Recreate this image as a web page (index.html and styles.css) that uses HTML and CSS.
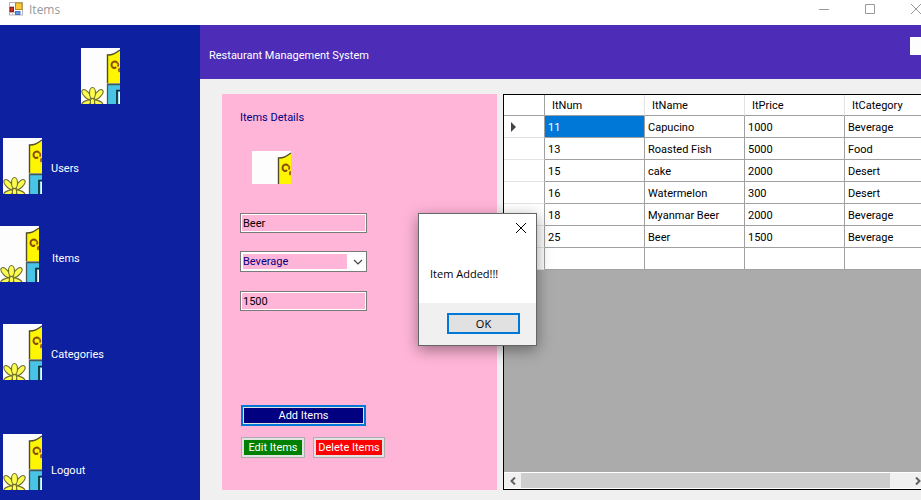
FILE: index.html
```html
<!DOCTYPE html>
<html lang="en">
<head>
<meta charset="utf-8">
<title>Items</title>
<link rel="stylesheet" href="styles.css">
</head>
<body>
<svg class="defs" aria-hidden="true">
  <symbol id="house" viewBox="0 0 39 56" preserveAspectRatio="xMinYMin slice">
    <rect width="39" height="56" fill="#fdfdfd"/>
    <path d="M27 7 C32 7 34 5.500 39 2 V35 H27Z" fill="#fdf600"/>
    <path d="M26.500 35.500 V7 C32 7 34 5.500 39 2" fill="none" stroke="#4f4a28" stroke-width="1.400"/>
    <path d="M36 14.500 C33.500 12.500 30.500 14 30.500 17 C30.500 20 33.500 20.800 35 19" fill="none" stroke="#8a4a0c" stroke-width="2"/>
    <path d="M36 14.500 Q38.500 16.500 36.500 18.500 M39 20.500 Q37 21 38.500 24" fill="none" stroke="#a05a0c" stroke-width="1.800"/>
    <path d="M26 35.500 H39" stroke="#b5b27a" stroke-width="1"/>
    <rect x="27" y="37" width="12" height="19" fill="#48c5e6"/>
    <path d="M26.500 56 V36.500 H39" fill="none" stroke="#44575b" stroke-width="1.300"/>
    <path d="M36 56 V42.500 H39" fill="none" stroke="#15262b" stroke-width="1.700"/>
    <rect x="37.500" y="44" width="2" height="12" fill="#fff"/>
    <g fill="#fbfb50" stroke="#6e6e2c" stroke-width="1.100">
      <ellipse cx="5.500" cy="55" rx="2.300" ry="5" transform="rotate(68 5.500 55)"/>
      <ellipse cx="17" cy="55" rx="2.300" ry="5" transform="rotate(-68 17 55)"/>
      <ellipse cx="5.500" cy="46.500" rx="2.800" ry="6" transform="rotate(-42 5.500 46.500)"/>
      <ellipse cx="17.500" cy="46.500" rx="2.800" ry="6" transform="rotate(42 17.500 46.500)"/>
      <ellipse cx="11.500" cy="45" rx="3" ry="5.500"/>
      <ellipse cx="11.500" cy="54" rx="2.200" ry="3.500"/>
    </g>
  </symbol>
</svg>
<div class="window">
  <header class="titlebar">
    <svg class="app-icon" viewBox="0 0 14 14" aria-hidden="true">
      <rect x=".500" y=".500" width="13" height="12.500" fill="#fff" stroke="#b5b5b5"/>
      <path d="M1 4.500H5 M1 10.500H6 M3.500 11V13" stroke="#c4c4c4"/>
      <rect x="6.500" y="1" width="6.500" height="6.500" fill="#fcc938" stroke="#b98716"/>
      <rect x="1" y="5.500" width="3.500" height="4" fill="#cb3028" stroke="#901b18"/>
      <rect x="6.500" y="9.500" width="4.500" height="3" fill="#6699ed" stroke="#4677c4"/>
    </svg>
    <h1 class="title">Items</h1>
    <div class="window-controls">
      <button type="button" aria-label="Minimize"><svg viewBox="0 0 10 10"><path d="M0 5.500H10"/></svg></button>
      <button type="button" aria-label="Maximize"><svg viewBox="0 0 10 10"><path d="M.500 .500H9.500V9.500H.500Z"/></svg></button>
      <button type="button" aria-label="Close"><svg viewBox="0 0 10 10"><path d="M0 0L10 10M10 0L0 10"/></svg></button>
    </div>
  </header>
  <div class="body">
    <nav class="sidebar">
      <svg class="picture logo" aria-hidden="true"><use href="#house"/></svg>
      <a class="nav-item users" href="#"><svg class="picture" aria-hidden="true"><use href="#house"/></svg><span>Users</span></a>
      <a class="nav-item items" href="#"><svg class="picture" aria-hidden="true"><use href="#house"/></svg><span>Items</span></a>
      <a class="nav-item categories" href="#"><svg class="picture" aria-hidden="true"><use href="#house"/></svg><span>Categories</span></a>
      <a class="nav-item logout" href="#"><svg class="picture" aria-hidden="true"><use href="#house"/></svg><span>Logout</span></a>
    </nav>
    <div class="content">
      <div class="banner"><span>Restaurant Management System</span><div class="banner-box"></div></div>
      <main class="main">
        <form class="details">
          <h2>Items Details</h2>
          <div class="thumb"><svg class="picture" aria-hidden="true"><use href="#house"/></svg></div>
          <input class="field" type="text" value="Beer" aria-label="Item name">
          <div class="combo">
            <select aria-label="Category"><option>Beverage</option><option>Food</option><option>Desert</option></select>
            <svg viewBox="0 0 10 6" aria-hidden="true"><path d="M1 1L5 5L9 1"/></svg>
          </div>
          <input class="field" type="text" value="1500" aria-label="Price">
          <div class="actions">
            <button class="btn add" type="button">Add Items</button>
            <button class="btn edit" type="button">Edit Items</button>
            <button class="btn delete" type="button">Delete Items</button>
          </div>
        </form>
        <section class="grid">
          <div class="grid-view">
            <table>
              <colgroup><col class="marker"><col><col><col><col></colgroup>
              <thead><tr><th></th><th>ItNum</th><th>ItName</th><th>ItPrice</th><th>ItCategory</th></tr></thead>
              <tbody>
                <tr><th><svg class="pointer" viewBox="0 0 5 10" aria-hidden="true"><path d="M0 0L5 5L0 10Z"/></svg></th><td class="selected">11</td><td>Capucino</td><td>1000</td><td>Beverage</td></tr>
                <tr><th></th><td>13</td><td>Roasted Fish</td><td>5000</td><td>Food</td></tr>
                <tr><th></th><td>15</td><td>cake</td><td>2000</td><td>Desert</td></tr>
                <tr><th></th><td>16</td><td>Watermelon</td><td>300</td><td>Desert</td></tr>
                <tr><th></th><td>18</td><td>Myanmar Beer</td><td>2000</td><td>Beverage</td></tr>
                <tr><th></th><td>25</td><td>Beer</td><td>1500</td><td>Beverage</td></tr>
                <tr><th></th><td></td><td></td><td></td><td></td></tr>
              </tbody>
            </table>
          </div>
          <div class="scrollbar">
            <button type="button" aria-label="Scroll left"><svg viewBox="0 0 6 8"><path d="M5 0.500L1.500 4L5 7.500"/></svg></button>
            <div class="track"><div class="thumb-bar"></div></div>
            <button class="right" type="button" aria-label="Scroll right"><svg viewBox="0 0 6 8"><path d="M1 0.500L4.500 4L1 7.500"/></svg></button>
          </div>
        </section>
      </main>
    </div>
  </div>
  <div class="dialog" role="dialog" aria-labelledby="msg">
    <div class="dialog-body">
      <button class="dialog-close" type="button" aria-label="Close"><svg viewBox="0 0 10 10"><path d="M0 0L10 10M10 0L0 10"/></svg></button>
      <p id="msg">Item Added!!!</p>
    </div>
    <div class="dialog-footer"><button class="ok" type="button">OK</button></div>
  </div>
</div>
</body>
</html>
```
FILE: styles.css
```css
* { box-sizing: border-box; }

body {
  margin: 0;
  font: 11px/16px Roboto, "Liberation Sans", sans-serif;
  color: #000;
}

button, input, select { font: inherit; margin: 0; }
h1, h2, p { margin: 0; font-weight: 400; }

.defs { position: absolute; width: 0; height: 0; }

.window {
  position: relative;
  display: flex;
  flex-direction: column;
  height: 100vh;
  overflow: hidden;
  background: #f0f0f0;
}

.titlebar {
  display: flex;
  flex: none;
  height: 25px;
  padding: 2px 0 0 9px;
  background: #fff;
  color: #999;
}
.app-icon { width: 14px; height: 14px; }
.title { margin-left: 6px; font: 12px/16px "Open Sans", "Noto Sans", sans-serif; }
.window-controls { display: flex; gap: 36px; margin-left: auto; }
.window-controls button {
  display: flex;
  padding: 2px 0 0;
  border: 0;
  background: none;
}
.window-controls svg { width: 10px; height: 10px; overflow: visible; fill: none; stroke: #999; }

.body { display: flex; flex: 1; min-height: 0; }

.sidebar {
  display: flex;
  flex-direction: column;
  flex: none;
  width: 200px;
  padding: 23px 0 0 3px;
  overflow: hidden;
  background: #0d20a0;
}
.picture { display: block; flex: none; width: 39px; height: 56px; }
.logo { margin-left: 78px; }
.nav-item {
  display: flex;
  flex: none;
  align-items: center;
  gap: 9px;
  color: #fff;
  text-decoration: none;
}
.nav-item .picture { align-self: flex-start; }
.nav-item span { padding-top: 2px; }
.users { height: 60px; margin-top: 34px; }
.items { height: 64px; margin: 28px 0 0 -3px; gap: 13px; }
.categories { height: 60px; margin-top: 34px; }
.logout { height: 72px; margin-top: 50px; }

.content { display: flex; flex: 1; flex-direction: column; min-width: 0; }
.banner {
  display: flex;
  flex: none;
  align-items: center;
  justify-content: space-between;
  height: 54px;
  padding: 8px 0 0 9px;
  background: #4d2db7;
  color: #fff;
}
.banner-box { width: 11px; height: 18px; margin-bottom: 20px; background: #fdfdfd; }

.main {
  display: flex;
  flex: 1;
  gap: 6px;
  min-height: 0;
  padding: 15px 0 10px 22px;
}

.details {
  display: flex;
  flex: none;
  flex-direction: column;
  align-items: flex-start;
  width: 275px;
  padding: 16px 18px 32px;
  background: #ffb5d8;
}
.details h2 { font-size: 11px; color: #000080; }
.thumb { height: 33px; margin: 25px 0 29px 12px; overflow: hidden; }
.field, .combo { width: 127px; border: 1px solid #7a7a7a; background: #fff; }
.field {
  height: 20px;
  padding: 0 2px;
  background: #ffb5d8;
  box-shadow: inset 0 0 0 1px #fff;
}
.combo {
  position: relative;
  display: flex;
  height: 21px;
  margin: 18px 0 19px;
  padding: 2px 19px 2px 2px;
}
.combo select {
  flex: 1;
  min-width: 0;
  padding: 0;
  border: 0;
  appearance: none;
  background: #ffb5d8;
  color: #000080;
  line-height: 15px;
}
.combo svg {
  position: absolute;
  top: 7px;
  right: 3px;
  width: 10px;
  height: 6px;
  fill: none;
  stroke: #444;
  stroke-width: 1.2;
}
.actions {
  display: grid;
  grid-template-columns: 64px 72px;
  gap: 11px 8px;
  margin: auto 0 0 1px;
}
.btn {
  height: 21px;
  padding: 0;
  border: 1px solid #adadad;
  box-shadow: inset 0 0 0 2px #e1e1e1;
  color: #fff;
}
.add {
  grid-column: 1 / -1;
  width: 125px;
  border: 2px solid #0078d7;
  box-shadow: inset 0 0 0 1px #e1e1e1;
  background: #000080;
}
.edit { background: #008000; }
.delete { background: #f00; }

.grid {
  display: flex;
  flex: 1;
  flex-direction: column;
  min-width: 0;
  border: solid #000;
  border-width: 1px 0 1px 1px;
  background: #ababab;
}
.grid-view { flex: 1; min-height: 0; overflow: hidden; }
table { width: 441px; table-layout: fixed; border-collapse: separate; border-spacing: 0; background: #fff; }
.marker { width: 41px; }
th, td {
  height: 22px;
  padding: 2px 3px 0;
  border: solid #a0a0a0;
  border-width: 0 1px 1px 0;
  font-weight: 400;
  text-align: left;
  line-height: 16px;
}
thead th { height: 21px; padding: 2px 7px 0; border-right-color: #e3e3e3; }
tbody th { padding-top: 0; border-bottom-color: #e3e3e3; }
th:first-child { border-right-color: #a0a0a0; }
.selected { background: #0078d7; color: #fff; }
.pointer { display: block; width: 5px; height: 10px; margin-left: 4px; fill: #444; }

.scrollbar {
  display: flex;
  flex: none;
  height: 17px;
  border: solid #fff;
  border-width: 1px 0;
  background: #f0f0f0;
}
.scrollbar button {
  display: flex;
  align-items: center;
  justify-content: center;
  width: 17px;
  padding: 0;
  border: 0;
  background: none;
}
.scrollbar .right { width: 12px; justify-content: flex-end; }
.scrollbar svg { width: 6px; height: 8px; fill: none; stroke: #606060; stroke-width: 2; }
.track { flex: 1; }
.thumb-bar { width: 95%; height: 100%; background: #cdcdcd; }

.dialog {
  position: absolute;
  top: 213px;
  left: 418px;
  width: 119px;
  border: 1px solid #666;
  background: #fff;
  box-shadow: 0 4px 14px rgba(0, 0, 0, .4);
  font-family: "Open Sans", "Noto Sans", sans-serif;
}
.dialog-body { display: flex; flex-direction: column; padding: 9px 10px 21px 11px; }
.dialog-close { display: flex; align-self: flex-end; padding: 0; border: 0; background: none; }
.dialog-close svg { width: 10px; height: 10px; overflow: visible; fill: none; stroke: #000; }
.dialog-body p { margin-top: 33px; white-space: nowrap; }
.dialog-footer { display: flex; justify-content: flex-end; padding: 10px 16px 11px; background: #f0f0f0; }
.ok { width: 73px; height: 21px; padding: 0; border: 2px solid #0078d7; background: #e1e1e1; }
```
